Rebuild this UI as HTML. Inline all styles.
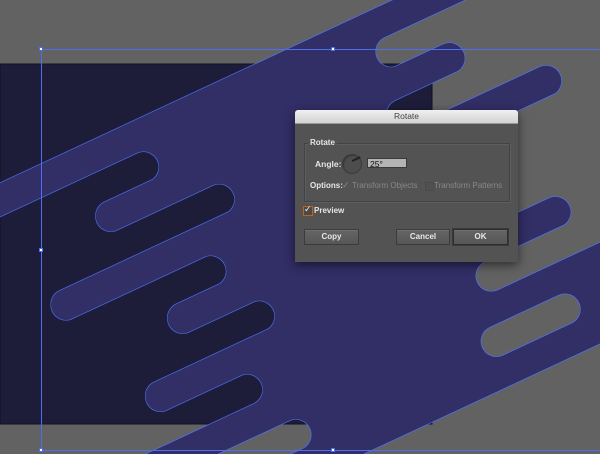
<!DOCTYPE html>
<html><head><meta charset="utf-8"><style>
html,body{margin:0;padding:0;width:600px;height:454px;overflow:hidden;background:#626262;font-family:"Liberation Sans",sans-serif}
#dlg{position:absolute;left:295px;top:110px;width:223px;height:152px;background:#535353;box-shadow:0 3px 10px rgba(0,0,0,.55);border-radius:3px 3px 0 0}
#tb{height:13px;background:linear-gradient(#f0f0f0,#d2d2d2);border-radius:3px 3px 0 0;text-align:center;font-size:8.5px;line-height:13px;color:#444;border-bottom:1px solid #999}
.t{position:absolute;font-size:8px;color:#e6e6e6;white-space:nowrap;line-height:10px}
.g{color:#888}
.btn{position:absolute;top:119px;height:14px;background:linear-gradient(#646464,#575757);border:1px solid #3c3c3c;box-shadow:inset 0 1px 0 #707070;font-size:8px;color:#e8e8e8;text-align:center;line-height:14px;font-weight:bold}
</style></head><body>
<svg width="600" height="454" style="position:absolute;left:0;top:0;overflow:hidden">
<defs>
<filter id="edge" filterUnits="userSpaceOnUse" x="0" y="0" width="600" height="454">
<feMorphology in="SourceAlpha" operator="dilate" radius="0.7" result="d"/>
<feComposite in="d" in2="SourceAlpha" operator="out" result="o"/>
<feFlood flood-color="#4d70f5" flood-opacity="1" result="c"/>
<feComposite in="c" in2="o" operator="in" result="ln"/>
<feMerge><feMergeNode in="SourceGraphic"/><feMergeNode in="ln"/></feMerge>
</filter>
<mask id="m" maskUnits="userSpaceOnUse" x="-2000" y="-2000" width="5000" height="5000">
<g transform="rotate(-25)">
<rect x="-2000" y="166" width="5000" height="399" fill="#fff"/>
<rect x="-2000" y="196.4" width="2075" height="31.3" rx="15.6" fill="#000"/>
<rect x="317" y="196.4" width="3000" height="31.3" rx="15.6" fill="#000"/>
<rect x="-2000" y="227.1" width="2009" height="31.3" fill="#000"/>
<rect x="383" y="227.1" width="3000" height="31.3" fill="#000"/>
<rect x="-6" y="227.4" width="404" height="30.7" rx="15.3" fill="#fff"/>
<rect x="-2000" y="257.8" width="2130" height="31.3" rx="15.6" fill="#000"/>
<rect x="300" y="257.8" width="3000" height="31.3" rx="15.6" fill="#000"/>
<rect x="-2000" y="288.5" width="1931" height="31.3" fill="#000"/>
<rect x="461" y="288.5" width="3000" height="31.3" fill="#000"/>
<rect x="-84" y="288.8" width="560" height="30.7" rx="15.3" fill="#fff"/>
<rect x="-2000" y="319.2" width="2092" height="31.3" rx="15.6" fill="#000"/>
<rect x="380" y="319.2" width="3000" height="31.3" rx="15.6" fill="#000"/>
<rect x="-2000" y="349.9" width="2031" height="31.3" fill="#000"/>
<rect x="365" y="349.9" width="3000" height="31.3" fill="#000"/>
<rect x="16" y="350.2" width="364" height="30.7" rx="15.3" fill="#fff"/>
<rect x="-2000" y="380.6" width="2117" height="31.3" rx="15.6" fill="#000"/>
<rect x="360" y="380.6" width="3000" height="31.3" rx="15.6" fill="#000"/>
<rect x="-2000" y="411.3" width="1978" height="31.3" fill="#000"/>
<rect x="414" y="411.3" width="3000" height="31.3" fill="#000"/>
<rect x="-37" y="411.6" width="466" height="30.7" rx="15.3" fill="#fff"/>
<rect x="-2000" y="442.0" width="2075" height="31.3" rx="15.6" fill="#000"/>
<rect x="313" y="442.0" width="3000" height="31.3" rx="15.6" fill="#000"/>
<rect x="-2000" y="503.4" width="2100" height="31.3" rx="15.6" fill="#000"/>
<rect x="290" y="503.4" width="107" height="31.3" rx="15.6" fill="#000"/>
</g>
</mask>
</defs>
<rect x="0" y="64" width="432" height="360" fill="#1e1d39"/>
<rect x="0" y="64" width="432" height="360" fill="none" stroke="#111126" stroke-width="1"/>
<g filter="url(#edge)"><rect x="-2000" y="-2000" width="5000" height="5000" fill="#302f66" mask="url(#m)"/></g>
<g fill="none" stroke="#4c6ff0" stroke-width="1">
<path d="M41.5 450.5V49.5H600M41.5 450.5H600"/>
</g>
<g fill="#fff" stroke="#4c6ff0" stroke-width="1">
<rect x="39.5" y="47.5" width="3" height="3"/><rect x="331.5" y="47.5" width="3" height="3"/>
<rect x="39.5" y="248.5" width="3" height="3"/><rect x="39.5" y="448.5" width="3" height="3"/>
<rect x="331.5" y="448.5" width="3" height="3"/>
</g>
</svg>
<div id="dlg">
<div id="tb">Rotate</div>
<div style="position:absolute;left:9px;top:33px;width:204px;height:57px;border:1px solid #434343;box-shadow:1px 1px 0 #5e5e5e, inset 1px 1px 0 #5e5e5e"></div>
<div class="t" style="left:13px;top:28px;background:#535353;padding:0 2px;font-weight:bold">Rotate</div>
<div class="t" style="left:20px;top:49px;font-weight:bold;font-size:8.5px">Angle:</div>
<div style="position:absolute;left:47px;top:44px;width:18px;height:18px;border-radius:50%;background:#4d4d4d;border:1px solid #3a3a3a;box-shadow:inset 1px 1px 1px #3a3a3a"></div>
<div style="position:absolute;left:57px;top:50px;width:9px;height:1.5px;background:#222;transform:rotate(-25deg);transform-origin:0 50%"></div>
<div style="position:absolute;left:72px;top:48px;height:10px;background:#b4b4b4;border:1px solid #3a3a3a;font-size:8.5px;line-height:10px;color:#111;padding-left:2px;box-sizing:border-box;width:40px">25°</div>
<div class="t" style="left:15px;top:71px;font-weight:bold">Options:</div>
<div class="t g" style="left:47px;top:70px;font-size:9px">✓</div>
<div class="t g" style="left:57px;top:71px">Transform Objects</div>
<div style="position:absolute;left:130px;top:72px;width:7px;height:7px;border:1px solid #4a4a4a;background:#505050"></div>
<div class="t g" style="left:139px;top:71px">Transform Patterns</div>
<div style="position:absolute;left:8px;top:96px;width:8px;height:8px;border:1px solid #c0621c;background:#4a4a4a"></div>
<div class="t" style="left:9px;top:94px;font-size:9px;color:#eee">✓</div>
<div class="t" style="left:19px;top:96px;font-weight:bold">Preview</div>
<div class="btn" style="left:9px;width:53px">Copy</div>
<div class="btn" style="left:101px;width:52px">Cancel</div>
<div class="btn" style="left:158px;width:53px;border-color:#2e2e2e;box-shadow:0 0 0 1px #3a3a3a, inset 0 1px 0 #707070">OK</div>
</div>
</body></html>
